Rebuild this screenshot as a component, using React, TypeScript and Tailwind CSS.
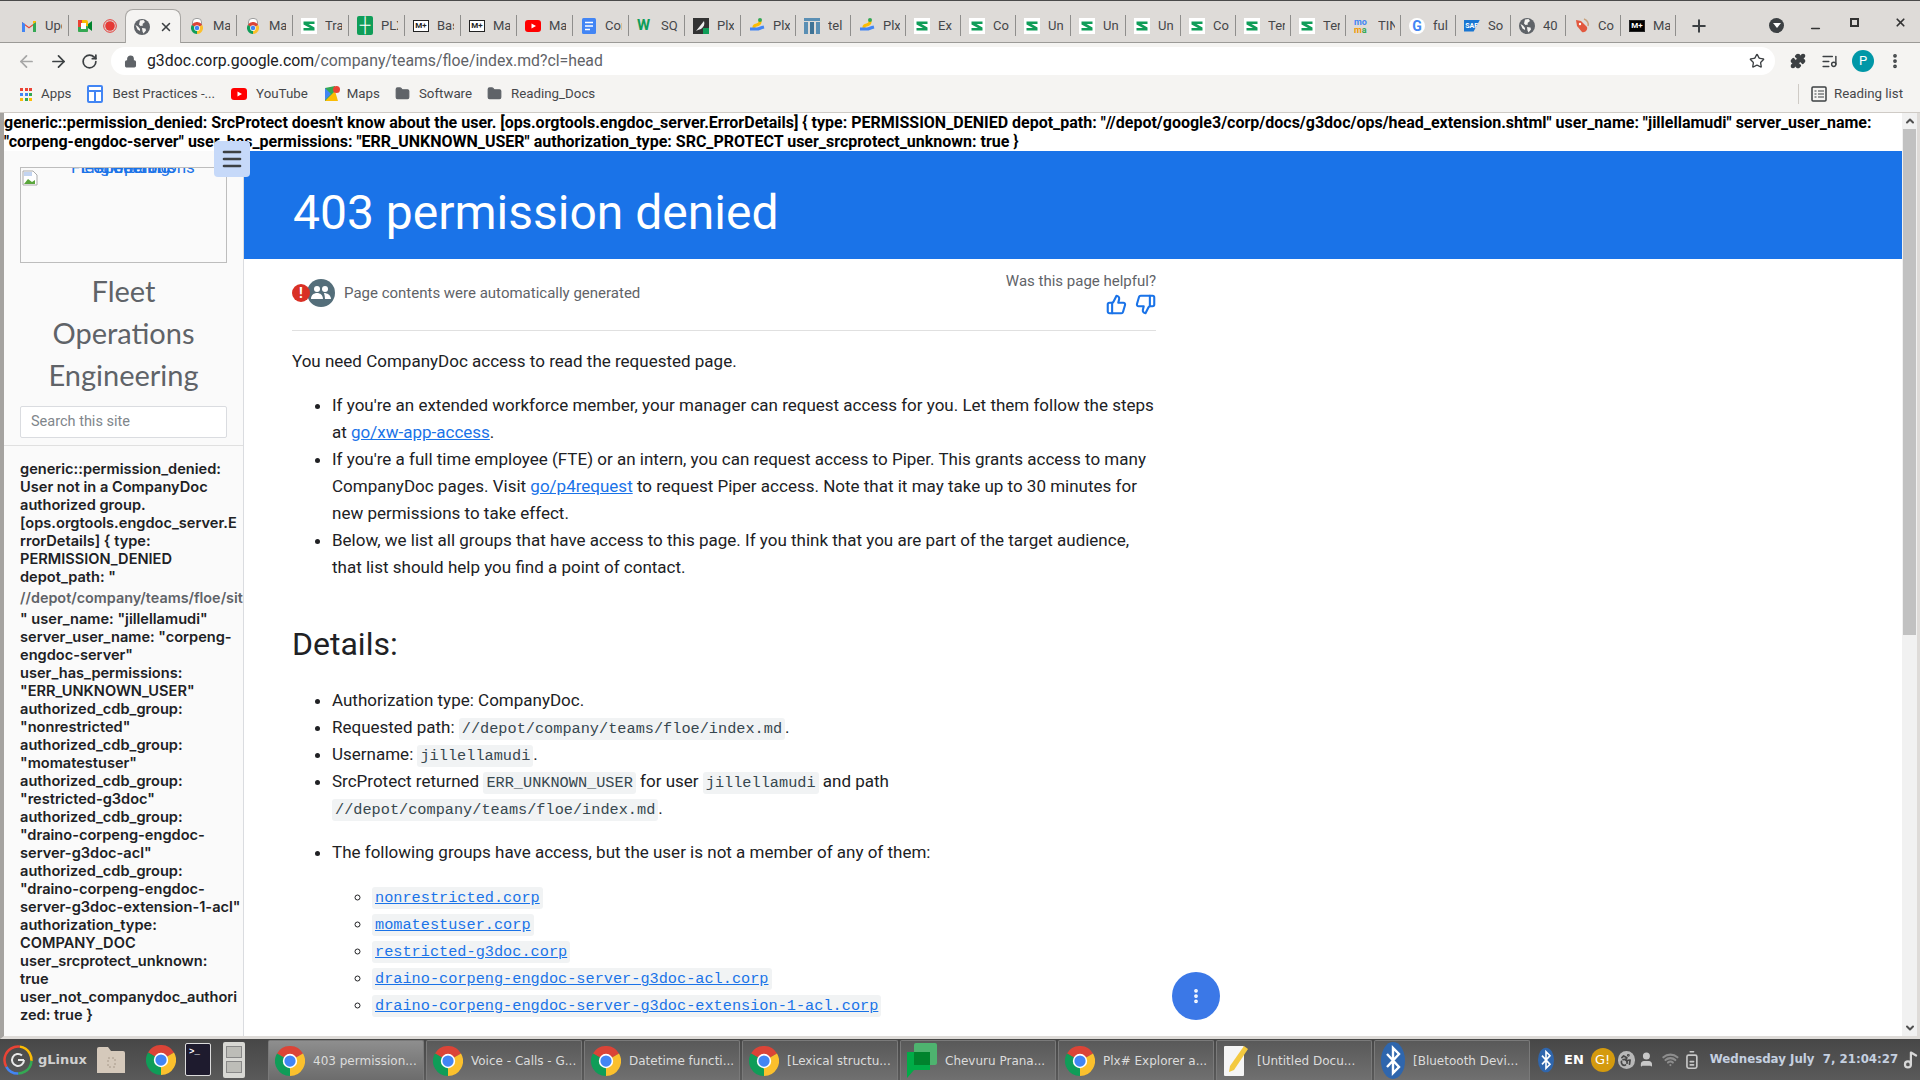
import { ReactNode } from "react";
import { ArrowLeft, ArrowRight, RotateCw, Lock, Star, Puzzle, X, Plus, Minus, EllipsisVertical, Menu, ThumbsUp, ThumbsDown, Folder, ChevronUp, ChevronDown, User, Wifi, BatteryMedium, Music2, Accessibility, ListMusic } from "lucide-react";

const Chrome = ({ size = 16 }: { size?: number }) => (
  <svg width={size} height={size} viewBox="0 0 48 48" className="shrink-0">
    <path d="M24 24 3.2 12A24 24 0 0 1 44.8 12Z" fill="#db4437" />
    <path d="M24 24 44.8 12A24 24 0 0 1 24 48Z" fill="#fbc02d" />
    <path d="M24 24 24 48A24 24 0 0 1 3.2 12Z" fill="#0f9d58" />
    <circle cx="24" cy="24" r="11.5" fill="#fff" />
    <circle cx="24" cy="24" r="9" fill="#4285f4" />
  </svg>
);

const Gmail = () => (
  <svg width="16" height="16" viewBox="0 0 16 16" className="shrink-0">
    <path d="M1 14V4l7 5 7-5v10h-3V7.5L8 10.5 4 7.5V14Z" fill="#ea4335" />
    <path d="M1 4v10h3V6Z" fill="#4285f4" />
    <path d="M15 4v10h-3V6Z" fill="#34a853" />
    <path d="M12 6l3-2v-1l-3 0Z" fill="#fbbc04" />
  </svg>
);

const Meet = () => (
  <svg width="16" height="16" viewBox="0 0 16 16" className="shrink-0">
    <rect x="1" y="2" width="10" height="12" rx="2" fill="#fbbc04" />
    <rect x="1" y="8" width="10" height="6" rx="1" fill="#34a853" />
    <rect x="1" y="2" width="4" height="7" fill="#ea4335" />
    <rect x="4" y="5" width="5" height="6" fill="#fff" />
    <path d="M11 6l4-3v10l-4-3Z" fill="#00832d" />
  </svg>
);

const Record = () => (
  <svg width="14" height="14" viewBox="0 0 14 14" className="shrink-0">
    <circle cx="7" cy="7" r="6.3" fill="none" stroke="#e53935" />
    <circle cx="7" cy="7" r="4.8" fill="#e53935" />
  </svg>
);

const DriveBag = () => (
  <div className="relative h-4 w-4 shrink-0">
    <div className="absolute left-[3px] top-0 h-[8px] w-[10px] rounded-t-sm border border-[#9e9e9e] bg-white" />
    <div className="absolute bottom-0 left-[2px]"><Chrome size={12} /></div>
  </div>
);

const SheetS = () => (
  <svg width="16" height="16" viewBox="0 0 16 16" className="shrink-0">
    <rect width="16" height="16" fill="#fff" />
    <path d="M2.5 3.5h11v2.5H7.5l6 3.5v3h-11v-2.5h6.5l-6.5-3.5Z" fill="#0f9d58" />
  </svg>
);

const GreenPlus = () => (
  <div className="flex h-[19px] w-4 shrink-0 items-center justify-center rounded-[2px] bg-[#0f9d58] text-[15px] font-bold leading-none text-white">┼</div>
);

const MdBox = ({ dark }: { dark?: boolean }) => (
  <div className={`flex h-3 w-4 shrink-0 items-center justify-center border border-[#222] text-[8px] font-bold leading-none ${dark ? "bg-black text-white" : "bg-white text-[#222]"}`}>M+</div>
);

const Youtube = () => (
  <svg width="16" height="16" viewBox="0 0 16 16" className="shrink-0">
    <rect y="2" width="16" height="12" rx="3" fill="#f00" />
    <path d="M6.5 5.5v5L11 8Z" fill="#fff" />
  </svg>
);

const Docs = () => (
  <svg width="16" height="16" viewBox="0 0 16 16" className="shrink-0">
    <rect x="1" y="0" width="14" height="16" rx="1.5" fill="#4285f4" />
    <path d="M4 4.5h8M4 8h8M4 11.5h5" stroke="#fff" strokeWidth="1.5" />
  </svg>
);

const Sqw = () => <span className="w-4 shrink-0 text-[15px] font-bold leading-none text-[#0f9d58]">W</span>;

const Feather = () => (
  <svg width="16" height="16" viewBox="0 0 16 16" className="shrink-0">
    <rect width="16" height="16" fill="#333" />
    <rect x="10" y="10" width="6" height="6" fill="#0f9d58" />
    <path d="M3 13 11 3c1 3 0 6-3 8l-3 1Z" fill="#eee" />
  </svg>
);

const PlxLink = () => (
  <svg width="16" height="16" viewBox="0 0 16 16" className="shrink-0">
    <path d="M5 12V9c0-3 6-1 6-5V3" fill="none" stroke="#fbbc04" strokeWidth="3" />
    <path d="M1 11h7c2 0 3-1 7-2" fill="none" stroke="#4285f4" strokeWidth="3" />
    <circle cx="11" cy="2" r="2" fill="#34a853" />
  </svg>
);

const Tel = () => (
  <svg width="16" height="16" viewBox="0 0 16 16" className="shrink-0">
    <rect width="16" height="3" fill="#5a8fb4" />
    <rect y="4" width="4" height="12" fill="#5a8fb4" />
    <rect x="6" y="4" width="4" height="12" fill="#3f7396" />
    <rect x="12" y="4" width="4" height="12" fill="#5a8fb4" />
  </svg>
);

const Moma = () => (
  <div className="w-4 shrink-0 text-[9px] font-bold leading-[8px]">
    <div className="text-[#4285f4]">mo</div>
    <div className="text-[#f29900]">m<span className="text-[#34a853]">a</span></div>
  </div>
);

const GoogleG = () => (
  <div className="flex h-4 w-4 shrink-0 items-center justify-center rounded-full bg-white text-[14px] font-bold leading-none text-[#4285f4]">G</div>
);

const Sap = () => (
  <div className="h-3 w-4 shrink-0 bg-[#1976d2] text-center text-[7px] font-bold leading-3 text-white [clip-path:polygon(0_0,100%_0,60%_100%,0_100%)]">SAP</div>
);

const GrayGlobe = () => (
  <svg width="16" height="16" viewBox="0 0 16 16" className="shrink-0">
    <circle cx="8" cy="8" r="8" fill="#5f6368" />
    <path d="M6 1.5 9.5 1 11 3 8.5 5 9 6.5 6.5 7 5 5.5ZM8 9l3.5.5.5 2-2.5 3-1-2ZM1.5 6 4 7.5 6 10v2L3.5 10.5Z" fill="#f5f4f2" />
  </svg>
);

const Bug = () => (
  <svg width="16" height="16" viewBox="0 0 16 16" className="shrink-0">
    <path d="M2 2l5 1 6 6c1 3-2 6-5 5L3 8Z" fill="#e2583e" />
    <path d="M10 1c3 1 5 4 4 7" fill="none" stroke="#c9a27e" strokeWidth="1.5" />
    <circle cx="6" cy="6" r="1.2" fill="#fff" />
  </svg>
);

type Tab = { icon: ReactNode; label?: string; extra?: ReactNode; active?: boolean };

const tabs: Tab[] = [
  { icon: <Gmail />, label: "Updates" },
  { icon: <Meet />, extra: <Record /> },
  { icon: <GrayGlobe />, active: true },
  { icon: <DriveBag />, label: "Ma" },
  { icon: <DriveBag />, label: "Ma" },
  { icon: <SheetS />, label: "Tra" },
  { icon: <GreenPlus />, label: "PLX" },
  { icon: <MdBox />, label: "Bas" },
  { icon: <MdBox />, label: "Ma" },
  { icon: <Youtube />, label: "Ma" },
  { icon: <Docs />, label: "Cor" },
  { icon: <Sqw />, label: "SQ" },
  { icon: <Feather />, label: "Plx" },
  { icon: <PlxLink />, label: "Plx" },
  { icon: <Tel />, label: "tel" },
  { icon: <PlxLink />, label: "Plx" },
  { icon: <SheetS />, label: "Ex" },
  { icon: <SheetS />, label: "Co" },
  { icon: <SheetS />, label: "Un" },
  { icon: <SheetS />, label: "Un" },
  { icon: <SheetS />, label: "Un" },
  { icon: <SheetS />, label: "Co" },
  { icon: <SheetS />, label: "Ter" },
  { icon: <SheetS />, label: "Ter" },
  { icon: <Moma />, label: "TIN" },
  { icon: <GoogleG />, label: "ful" },
  { icon: <Sap />, label: "So" },
  { icon: <GrayGlobe />, label: "40" },
  { icon: <Bug />, label: "Co" },
  { icon: <MdBox dark />, label: "Ma" },
];

const TabStrip = () => (
  <div className="flex h-[43px] shrink-0 border-b border-t border-b-[#9b9a97] border-t-[#4a4a4a] bg-[#dedbd8] pl-[13px] pt-[8px]">
    {tabs.map((tab, i) =>
      tab.active ? (
        <div key={i} className="relative z-10 -mb-px flex h-[34px] w-[56px] items-center rounded-t-lg border border-b-0 border-[#a8a6a3] bg-[#f5f4f2] pl-[8px]">
          {tab.icon}
          <X size={14} strokeWidth={2.6} className="ml-[9px] text-[#3c4043]" />
        </div>
      ) : (
        // chrome hands the spare pixels to the first tabs
        <div key={i} className={`flex h-[33px] items-center pl-[8px] ${i < 13 ? "w-[56px]" : "w-[55px]"}`}>
          {tab.icon}
          {tab.label && <span className="ml-[8px] w-[17px] overflow-hidden whitespace-nowrap text-[13px] text-[#45474a]">{tab.label}</span>}
          {tab.extra && <span className="ml-[10px]">{tab.extra}</span>}
          {tabs[i + 1]?.active || tab.extra ? null : <span className="ml-auto h-[21px] w-px bg-[#8f8e8c]" />}
        </div>
      ),
    )}
    <Plus size={20} strokeWidth={2.4} className="ml-[13px] mt-[7px] text-[#3c4043]" />
    <div className="ml-auto flex items-start">
      <div className="mr-[25px] mt-[9px] flex h-[15px] w-[15px] items-center justify-center rounded-full bg-[#3c4043]">
        <div className="h-0 w-0 border-x-[4px] border-t-[5px] border-x-transparent border-t-white" />
      </div>
      <Minus size={13} strokeWidth={3} className="mr-[28px] mt-[13px] text-[#333]" />
      <div className="mr-[35px] mt-[9px] h-[9px] w-[9px] border-2 border-[#333]" />
      <X size={13} strokeWidth={3.2} className="mr-[13px] mt-[7px] text-[#333]" />
    </div>
  </div>
);

const Toolbar = () => (
  <div className="flex h-[32px] shrink-0 items-end bg-[#f5f4f2] pl-[17px]">
    <div className="flex h-[28px] items-center">
      <ArrowLeft size={19} strokeWidth={2.2} className="text-[#a6a6a6]" />
      <ArrowRight size={19} strokeWidth={2.2} className="ml-[13px] text-[#3c4043]" />
      <RotateCw size={17} strokeWidth={2.4} className="ml-[13px] text-[#3c4043]" />
    </div>
    <div className="ml-[13px] flex h-[28px] w-[1664px] items-center rounded-full bg-white pl-[13px] pr-[10px]">
      <Lock size={13} strokeWidth={2.4} fill="#5f6368" className="text-[#5f6368]" />
      <div className="ml-[10px] whitespace-nowrap text-[15.8px] text-[#5f6368]"><span className="text-[#202124]">g3doc.corp.google.com</span>/company/teams/floe/index.md?cl=head</div>
      <Star size={16} strokeWidth={2} className="ml-auto text-[#3c4043]" />
    </div>
    <div className="flex h-[28px] items-center">
      <Puzzle size={16} fill="#3c4043" className="ml-[15px] text-[#3c4043]" />
      <ListMusic size={17} strokeWidth={2} className="ml-[15px] text-[#3c4043]" />
      <div className="ml-[14px] flex h-[22px] w-[22px] items-center justify-center rounded-full bg-[#0097a7] text-[13px] text-white">P</div>
      <EllipsisVertical size={18} strokeWidth={3} className="ml-[12px] text-[#3c4043]" />
    </div>
  </div>
);

const AppsGrid = () => (
  <div className="grid h-[12px] w-[12px] shrink-0 grid-cols-3 gap-[2px]">
    {["#ea4335", "#ea4335", "#ea4335", "#4285f4", "#4285f4", "#34a853", "#fbbc04", "#34a853", "#fbbc04"].map((c, i) => (
      <span key={i} className="h-[3px] w-[3px]" style={{ backgroundColor: c }} />
    ))}
  </div>
);

const BestPractices = () => (
  <svg width="16" height="18" viewBox="0 0 16 18" className="shrink-0">
    <rect x="1" y="1" width="14" height="16" rx="1" fill="#fff" stroke="#4285f4" strokeWidth="2" />
    <path d="M1 6h14M8 6v11" stroke="#4285f4" strokeWidth="2" />
  </svg>
);

const MapsPin = () => (
  <svg width="17" height="17" viewBox="0 0 17 17" className="-mr-[3px] shrink-0">
    <path d="M1 3 11 1v15L1 16Z" fill="#34a853" />
    <path d="M1 16 11 6l3 10Z" fill="#fbbc04" />
    <path d="M1 3l6 6-6 6Z" fill="#4285f4" />
    <circle cx="12.5" cy="4.5" r="3.5" fill="#ea4335" />
  </svg>
);

const Bookmark = ({ icon, label, className }: { icon: ReactNode; label: string; className: string }) => (
  <div className={`flex items-center ${className}`}>
    {icon}
    <span className="ml-[9px] whitespace-nowrap">{label}</span>
  </div>
);

const Bookmarks = () => (
  <div className="flex h-[38px] shrink-0 items-center border-b border-[#cfcbc6] bg-[#f5f4f2] pl-[20px] pr-[17px] text-[13.3px] text-[#45474a]">
    <Bookmark icon={<AppsGrid />} label="Apps" className="" />
    <Bookmark icon={<BestPractices />} label="Best Practices -..." className="ml-[16px]" />
    <Bookmark icon={<Youtube />} label="YouTube" className="ml-[16px]" />
    <Bookmark icon={<MapsPin />} label="Maps" className="ml-[16px]" />
    <Bookmark icon={<Folder size={15} fill="#5f6368" className="text-[#5f6368]" />} label="Software" className="ml-[15px]" />
    <Bookmark icon={<Folder size={15} fill="#5f6368" className="text-[#5f6368]" />} label="Reading_Docs" className="ml-[15px]" />
    <div className="ml-auto flex items-center">
      <span className="mr-[12px] h-[20px] w-px bg-[#cfcbc6]" />
      <svg width="16" height="16" viewBox="0 0 16 16" className="mr-[7px]">
        <rect x="1" y="1" width="14" height="14" rx="1" fill="none" stroke="#3c4043" strokeWidth="1.5" />
        <path d="M3.5 5h2M7 5h6M3.5 8h2M7 8h6M3.5 11h2M7 11h6" stroke="#3c4043" strokeWidth="1.2" />
      </svg>
      Reading list
    </div>
  </div>
);

const sideLines = [
  "generic::permission_denied:",
  "User not in a CompanyDoc",
  "authorized group.",
  "[ops.orgtools.engdoc_server.E",
  "rrorDetails] { type:",
  "PERMISSION_DENIED",
  'depot_path: "',
];

const sideLinesAfter = [
  '" user_name: "jillellamudi"',
  'server_user_name: "corpeng-',
  'engdoc-server"',
  "user_has_permissions:",
  '"ERR_UNKNOWN_USER"',
  "authorized_cdb_group:",
  '"nonrestricted"',
  "authorized_cdb_group:",
  '"momatestuser"',
  "authorized_cdb_group:",
  '"restricted-g3doc"',
  "authorized_cdb_group:",
  '"draino-corpeng-engdoc-',
  'server-g3doc-acl"',
  "authorized_cdb_group:",
  '"draino-corpeng-engdoc-',
  'server-g3doc-extension-1-acl"',
  "authorization_type:",
  "COMPANY_DOC",
  "user_srcprotect_unknown:",
  "true",
  "user_not_companydoc_authori",
  "zed: true }",
];

const Sidebar = () => (
  <aside className="w-[240px] shrink-0 overflow-hidden border-r border-[#dadce0] bg-[#fafafa]">
    <div className="px-[16px] pt-[16px]">
      <div className="relative h-[96px] w-[207px] overflow-hidden border border-[#bdbdbd]">
        <svg width="16" height="16" viewBox="0 0 16 16" className="absolute left-[1px] top-[2px]">
          <path d="M1 1h10l4 4v10H1Z" fill="#fff" stroke="#aaa" />
          <path d="M2 14l4-5 4 3 3-2v4Z" fill="#5aa63c" />
          <path d="M2 2h8v4H2Z" fill="#c3d4f0" />
        </svg>
        <span className="absolute left-[50px] top-[-10px] whitespace-nowrap text-[17px] leading-[18px] text-[#1a73e8]">Fleet Operations</span>
        <span className="absolute left-[60px] top-[-10px] whitespace-nowrap text-[17px] leading-[18px] text-[#1a73e8]">Engineering</span>
        <span className="absolute left-[72px] top-[-10px] whitespace-nowrap text-[17px] leading-[18px] text-[#1a73e8]">Operations</span>
      </div>
      <div className="mt-[7px] text-center font-['Lato',sans-serif] text-[29px] leading-[42px] text-[#5f6368]">
        <div>Fleet</div>
        <div>Operations</div>
        <div>Engineering</div>
      </div>
      <div className="mt-[10px] flex h-[32px] items-center rounded-[2px] border border-[#dadce0] bg-white pl-[10px] text-[14.5px] text-[#80868b]">Search this site</div>
    </div>
    <div className="mt-[7px] h-px bg-[#e0e0e0]" />
    <div className="pl-[16px] pt-[14px] font-['Inter',sans-serif] text-[14.6px] font-semibold leading-[18px] text-[#202124]">
      {sideLines.map((line, i) => <div key={i} className="whitespace-nowrap">{line}</div>)}
      <div className="whitespace-nowrap text-[14.4px] leading-[24px] text-[#5f6368]">//depot/company/teams/floe/site/index.md</div>
      {sideLinesAfter.map((line, i) => <div key={i} className="whitespace-nowrap">{line}</div>)}
    </div>
  </aside>
);

const Code = ({ children }: { children: ReactNode }) => (
  <code className="rounded-[3px] bg-[#f1f3f4] px-[3px] py-[2px] font-['Liberation_Mono',monospace] text-[15.25px] leading-none text-[#37474f]">{children}</code>
);

const Link = ({ children }: { children: ReactNode }) => <a className="text-[#1a73e8] underline">{children}</a>;

const CodeLink = ({ children }: { children: ReactNode }) => (
  <code className="rounded-[3px] bg-[#f1f3f4] px-[3px] py-[2px] font-['Liberation_Mono',monospace] text-[15.25px] leading-none text-[#1a73e8] underline">{children}</code>
);

const Main = () => (
  <main className="relative min-w-0 flex-1 overflow-hidden bg-white">
    <div className="flex h-[108px] items-center bg-[#1a73e8] pl-[49px] pt-[16px] text-[48px] font-normal text-white">403 permission denied</div>
    <div className="w-[912px] pl-[48px] text-[17px] leading-[27px] text-[#202124]">
      <div className="flex h-[72px] items-start justify-between border-b border-[#e0e0e0] pt-[12px]">
        <div className="mt-[8px] flex items-center">
          <div className="relative h-[28px] w-[43px]">
            <div className="absolute left-[15px] top-0 flex h-[28px] w-[28px] items-center justify-center rounded-full bg-[#546e7a]">
              <svg width="20" height="16" viewBox="0 0 20 16">
                <circle cx="6" cy="4" r="3" fill="#fff" />
                <circle cx="14" cy="4" r="3" fill="#fff" />
                <path d="M0 14c0-4 3-6 6-6s6 2 6 6Z M13 8c3 0 7 2 7 6h-6c0-2-.5-4-1-6Z" fill="#fff" />
              </svg>
            </div>
            <div className="absolute left-0 top-[5px] flex h-[18px] w-[18px] items-center justify-center rounded-full bg-[#d93025] text-[14px] font-bold leading-none text-white">!</div>
          </div>
          <span className="ml-[9px] text-[15px] leading-[28px] text-[#5f6368]">Page contents were automatically generated</span>
        </div>
        <div className="flex flex-col items-end">
          <span className="text-[15px] leading-[20px] text-[#5f6368]">Was this page helpful?</span>
          <div className="mt-[3px] flex gap-[8px] text-[#1a73e8]">
            <ThumbsUp size={21} strokeWidth={2.4} />
            <ThumbsDown size={21} strokeWidth={2.4} />
          </div>
        </div>
      </div>
      <p className="mt-[17px]">You need CompanyDoc access to read the requested page.</p>
      <ul className="mt-[17px] list-disc pl-[40px]">
        <li>If you're an extended workforce member, your manager can request access for you. Let them follow the steps at <Link>go/xw-app-access</Link>.</li>
        <li>If you're a full time employee (FTE) or an intern, you can request access to Piper. This grants access to many CompanyDoc pages. Visit <Link>go/p4request</Link> to request Piper access. Note that it may take up to 30 minutes for new permissions to take effect.</li>
        <li>Below, we list all groups that have access to this page. If you think that you are part of the target audience, that list should help you find a point of contact.</li>
      </ul>
      <h2 className="mt-[43px] text-[32px] leading-[40px]">Details:</h2>
      <ul className="mt-[23px] list-disc pl-[40px]">
        <li>Authorization type: CompanyDoc.</li>
        <li>Requested path: <Code>//depot/company/teams/floe/index.md</Code>.</li>
        <li>Username: <Code>jillellamudi</Code>.</li>
        <li>SrcProtect returned <Code>ERR_UNKNOWN_USER</Code> for user <Code>jillellamudi</Code> and path <Code>//depot/company/teams/floe/index.md</Code>.</li>
        <li className="mt-[17px]">
          The following groups have access, but the user is not a member of any of them:
          <ul className="mt-[17px] list-[circle] pl-[40px]">
            <li><CodeLink>nonrestricted.corp</CodeLink></li>
            <li><CodeLink>momatestuser.corp</CodeLink></li>
            <li><CodeLink>restricted-g3doc.corp</CodeLink></li>
            <li><CodeLink>draino-corpeng-engdoc-server-g3doc-acl.corp</CodeLink></li>
            <li><CodeLink>draino-corpeng-engdoc-server-g3doc-extension-1-acl.corp</CodeLink></li>
          </ul>
        </li>
      </ul>
    </div>
    <button className="absolute left-[928px] top-[821px] flex h-[48px] w-[48px] items-center justify-center rounded-full bg-[#3b78e7] text-white">
      <EllipsisVertical size={18} strokeWidth={3} />
    </button>
  </main>
);

const Scrollbar = () => (
  <div className="flex w-[15px] shrink-0 flex-col items-center bg-[#f1f1f1]">
    <ChevronUp size={12} strokeWidth={4} className="mt-[2px] text-[#505050]" />
    <div className="mt-[2px] h-[506px] w-[13px] bg-[#c1c1c1]" />
    <ChevronDown size={12} strokeWidth={4} className="mb-[2px] mt-auto text-[#505050]" />
  </div>
);

const tasks: { icon: ReactNode; label: string; active?: boolean }[] = [
  { icon: <Chrome size={30} />, label: "403 permission...", active: true },
  { icon: <Chrome size={30} />, label: "Voice - Calls - G..." },
  { icon: <Chrome size={30} />, label: "Datetime functi..." },
  { icon: <Chrome size={30} />, label: "[Lexical structu..." },
  {
    icon: (
      <svg width="30" height="36" viewBox="0 0 30 36" className="shrink-0">
        <rect x="7" y="0" width="23" height="22" rx="2" fill="#4eb36f" />
        <path d="M0 9h23v18H7l-7 8Z" fill="#00ac47" />
        <rect x="7" y="9" width="16" height="13" fill="#00832d" />
      </svg>
    ),
    label: "Chevuru Prana...",
  },
  { icon: <Chrome size={30} />, label: "Plx# Explorer a..." },
  {
    icon: (
      <svg width="26" height="34" viewBox="0 0 26 34" className="shrink-0">
        <rect x="1" y="2" width="20" height="30" rx="1" fill="#f5f5f5" />
        <path d="M7 22 21 2l4 3L11 26l-5 2Z" fill="#f3c93f" />
      </svg>
    ),
    label: "[Untitled Docu...",
  },
  { icon: <BluetoothIcon />, label: "[Bluetooth Devi..." },
];

function BluetoothIcon({ small }: { small?: boolean }) {
  return (
    <svg width={small ? 16 : 24} height={small ? 28 : 37} viewBox="0 0 24 37" className="shrink-0">
      <ellipse cx="12" cy="18.5" rx="12" ry="18.5" fill="#2f66ad" />
      <path d="M6 12l12 13-6 6V6l6 6L6 25" fill="none" stroke="#fff" strokeWidth="2.4" />
    </svg>
  );
}

const Taskbar = () => (
  <div className="flex h-[41px] shrink-0 items-center bg-gradient-to-b from-[#474747] to-[#5a5a5a] font-['DejaVu_Sans',sans-serif] text-[12px] text-[#dcdcdc]">
    <svg width="30" height="36" viewBox="0 0 30 36" className="ml-[3px] shrink-0">
      <circle cx="15" cy="18" r="13.5" fill="none" stroke="#ea4335" strokeWidth="2.5" strokeDasharray="30 60" transform="rotate(150 15 18)" />
      <circle cx="15" cy="18" r="13.5" fill="none" stroke="#fbbc04" strokeWidth="2.5" strokeDasharray="20 70" strokeDashoffset="-30" transform="rotate(150 15 18)" />
      <circle cx="15" cy="18" r="13.5" fill="none" stroke="#34a853" strokeWidth="2.5" strokeDasharray="20 70" strokeDashoffset="-50" transform="rotate(150 15 18)" />
      <circle cx="15" cy="18" r="13.5" fill="none" stroke="#4285f4" strokeWidth="2.5" strokeDasharray="20 70" strokeDashoffset="-70" transform="rotate(150 15 18)" />
      <path d="M21 18h-6M21 18a6 6 0 1 1-2-4.5" fill="none" stroke="#e8e8e8" strokeWidth="2" />
    </svg>
    <span className="ml-[5px] w-[48px] text-[13px] font-bold text-[#d0d0d0]">gLinux</span>
    <svg width="28" height="28" viewBox="0 0 28 28" className="ml-[11px] shrink-0">
      <path d="M0 3a2 2 0 0 1 2-2h9l3 4h12a2 2 0 0 1 2 2v20H0Z" fill="#d5c9bb" />
      <rect x="11" y="12" width="7" height="9" fill="none" stroke="#a89a8b" strokeDasharray="2 2" />
    </svg>
    <div className="ml-[21px]"><Chrome size={30} /></div>
    <div className="ml-[9px] flex h-[33px] w-[26px] shrink-0 flex-col rounded-[2px] border border-[#dcdcdc] bg-[#1e1b2e] pl-[3px] pt-[3px] font-['Liberation_Mono',monospace] text-[9px] font-bold leading-[10px] text-white">&gt;_</div>
    <div className="ml-[12px] flex h-[36px] w-[22px] shrink-0 flex-col justify-around rounded-[2px] bg-[#d8d8d4] px-[3px] py-[3px]">
      <div className="h-[12px] border border-[#888] bg-[#bdbdb8]" />
      <div className="h-[12px] border border-[#888] bg-[#bdbdb8]" />
    </div>
    <div className="ml-[23px] flex h-full gap-[2px] pt-[1px]">
      {tasks.map((task) => (
        <div key={task.label} className={`flex w-[156px] items-center overflow-hidden rounded-t-[2px] border border-b-0 border-[#7a7a7a] pl-[6px] ${task.active ? "bg-gradient-to-b from-[#8e8e8e] to-[#6c6c6c]" : "bg-gradient-to-b from-[#595959] to-[#707070]"}`}>
          {task.icon}
          <span className="ml-[8px] whitespace-nowrap">{task.label}</span>
        </div>
      ))}
    </div>
    <div className="ml-[8px]"><BluetoothIcon small /></div>
    <span className="ml-[10px] text-[13px] font-bold text-white">EN</span>
    <div className="ml-[7px] flex h-[24px] w-[24px] items-center justify-center rounded-full bg-[#d49a0e] text-[13px] text-white">G!</div>
    <div className="ml-[3px] flex h-[18px] w-[18px] items-center justify-center rounded-full bg-[#b8b8b8] text-[#474747]"><Accessibility size={14} strokeWidth={3} /></div>
    <User size={17} fill="#c8c8c8" className="ml-[3px] text-[#c8c8c8]" />
    <Wifi size={17} strokeWidth={3} className="ml-[7px] text-[#8d8d8d]" />
    <BatteryMedium size={20} className="ml-[3px] -rotate-90 text-[#c8c8c8]" />
    <span className="ml-[8px] whitespace-pre text-[11.8px] font-bold text-[#c5d0e0]">Wednesday July  7, 21:04:27</span>
    <Music2 size={18} strokeWidth={3} className="ml-[4px] text-[#d8d8d8]" />
  </div>
);

export default function App() {
  return (
    <div className="flex h-screen w-screen flex-col overflow-hidden font-['Roboto',sans-serif]">
      <TabStrip />
      <Toolbar />
      <Bookmarks />
      <div className="relative flex min-h-0 flex-1 border-b-[3px] border-l-[4px] border-r-[3px] border-b-[#dedbd8] border-l-[#a5a3a0] border-r-[#dedbd8] bg-white">
        <div className="flex min-w-0 flex-1 flex-col">
          <div className="h-[38px] shrink-0 whitespace-nowrap bg-white text-[16px] font-bold leading-[19px] text-black">
            <div>generic::permission_denied: SrcProtect doesn't know about the user. [ops.orgtools.engdoc_server.ErrorDetails] {"{"} type: PERMISSION_DENIED depot_path: "//depot/google3/corp/docs/g3doc/ops/head_extension.shtml" user_name: "jillellamudi" server_user_name:</div>
            <div>"corpeng-engdoc-server" user_has_permissions: "ERR_UNKNOWN_USER" authorization_type: SRC_PROTECT user_srcprotect_unknown: true {"}"}</div>
          </div>
          <div className="flex min-h-0 flex-1">
            <Sidebar />
            <Main />
          </div>
        </div>
        <Scrollbar />
        <button className="absolute left-[210px] top-[28px] flex h-[36px] w-[36px] items-center justify-center rounded-[4px] bg-[#c6d9f9] text-[#3c4043]">
          <Menu size={24} strokeWidth={2.6} />
        </button>
      </div>
      <Taskbar />
    </div>
  );
}
